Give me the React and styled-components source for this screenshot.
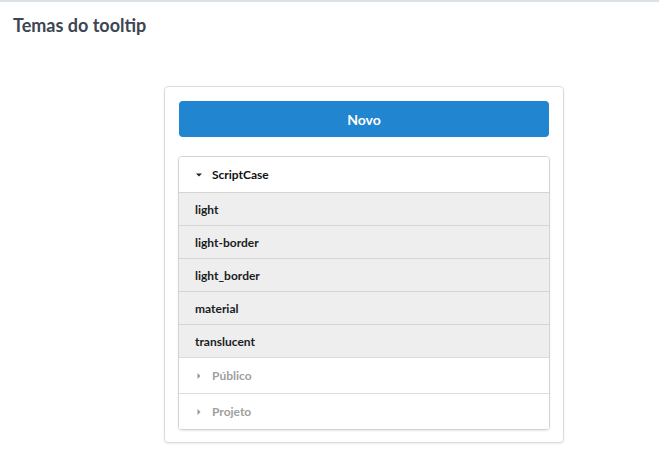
import React from "react";
import styled, { createGlobalStyle } from "styled-components";

const Global = createGlobalStyle`
  html, body { margin: 0; padding: 0; background: #fff; }
  body { font-family: Lato, "Open Sans", sans-serif; }
`;

const Page = styled.div`
  border-top: 2px solid #dae1e7;
  min-height: 471px;
`;

const Title = styled.h1`
  margin: 0;
  padding: 13px 13px 0;
  font-size: 18px;
  line-height: 21px;
  font-weight: 700;
  color: #3d4652;
`;

const Wrap = styled.div`
  padding: 50px 0 0 164px;
`;

const Card = styled.div`
  width: 370px;
  padding: 14px 14px 12px;
  border: 1px solid #dcdcdc;
  border-radius: 4px;
  box-shadow: 0 1px 2px rgba(0, 0, 0, 0.08);
  background: #fff;
  display: flex;
  flex-direction: column;
  gap: 19px;
`;

const Button = styled.button`
  height: 36px;
  margin: 0;
  border: none;
  border-radius: 4px;
  background: #2185d0;
  color: #fff;
  font-family: Lato, sans-serif;
  font-weight: 700;
  font-size: 14px;
  cursor: pointer;
`;

const Tree = styled.div`
  margin: 0 -1px;
  border: 1px solid #d4d4d5;
  border-radius: 4px;
  overflow: hidden;
  box-shadow: 0 1px 2px rgba(0, 0, 0, 0.1);
`;

const Group = styled.div`
  display: flex;
  align-items: center;
  gap: 10px;
  height: 35px;
  padding-left: 17px;
  font-size: 12px;
  font-weight: 700;
  color: ${(p) => (p.$open ? "#111" : "#a0a0a0")};
  border-top: ${(p) => (p.$first ? "none" : "1px solid #dcdcdc")};
  background: #fff;
`;

const Item = styled.div`
  display: flex;
  align-items: center;
  height: 32px;
  padding-left: 16px;
  font-size: 12px;
  font-weight: 700;
  color: #1b1c1d;
  background: #eeeeee;
  border-top: 1px solid #d4d4d5;
`;

const Caret = ({ open }) => (
  <svg width="6" height="6" viewBox="0 0 6 6">
    {open ? (
      <path d="M0 1.5 L6 1.5 L3 4.5 Z" fill="#222" />
    ) : (
      <path d="M1.5 0 L4.5 3 L1.5 6 Z" fill="#999" />
    )}
  </svg>
);

const items = ["light", "light-border", "light_border", "material", "translucent"];

export default function App() {
  return (
    <Page>
      <Global />
      <Title>Temas do tooltip</Title>
      <Wrap>
        <Card>
          <Button>Novo</Button>
          <Tree>
            <Group $open $first>
              <Caret open />
              ScriptCase
            </Group>
            {items.map((i) => (
              <Item key={i}>{i}</Item>
            ))}
            <Group>
              <Caret />
              Público
            </Group>
            <Group>
              <Caret />
              Projeto
            </Group>
          </Tree>
        </Card>
      </Wrap>
    </Page>
  );
}
